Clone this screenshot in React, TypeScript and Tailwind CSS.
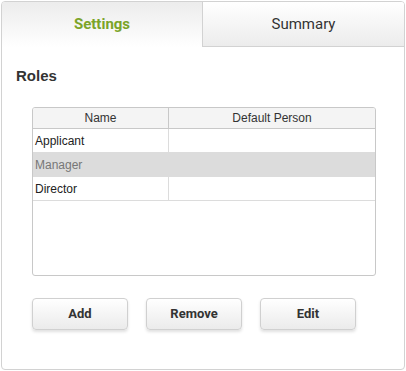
import React from "react";

const rows = [
  { name: "Applicant", person: "", selected: false },
  { name: "Manager", person: "", selected: true },
  { name: "Director", person: "", selected: false },
];

const ActionButton = ({ label }: { label: string }) => (
  <button className="w-[96px] h-[32px] rounded-[4px] border border-[#d0d0d0] bg-gradient-to-b from-white to-[#ebebeb] shadow-[0_2px_3px_rgba(0,0,0,0.12)] text-[13px] font-bold text-[#333] font-['Roboto',sans-serif]">
    {label}
  </button>
);

export default function App() {
  return (
    <div className="p-px bg-white w-[406px] h-[371px]">
      <div className="w-[404px] h-[369px] border border-[#d2d2d2] rounded-[4px] bg-white flex flex-col overflow-hidden">
        <div className="flex h-[45px] shrink-0">
          <div className="w-[200px] flex items-center justify-center bg-gradient-to-b from-[#ececec] to-white text-[15px] font-bold text-[#7ba428] font-['Roboto',sans-serif]">
            Settings
          </div>
          <div className="flex-1 flex items-center justify-center bg-gradient-to-b from-white to-[#ececec] border-l border-b border-[#d2d2d2] text-[15px] text-[#333] font-['Roboto',sans-serif]">
            Summary
          </div>
        </div>
        <div className="flex flex-col px-[14px] pt-[20px]">
          <h2 className="text-[15px] leading-[18px] font-bold text-[#333] font-['Liberation_Sans',Arial,sans-serif]">
            Roles
          </h2>
          <div className="mt-[22px] ml-[16px] w-[344px] h-[169px] border border-[#c8c8c8] rounded-[3px] overflow-hidden font-['Liberation_Sans',Arial,sans-serif] text-[12px]">
            <div className="grid grid-cols-[136px_1fr] h-[21px] bg-[#f4f4f4] border-b border-[#c8c8c8] text-[#333]">
              <div className="flex items-center justify-center border-r border-[#c8c8c8]">Name</div>
              <div className="flex items-center justify-center">Default Person</div>
            </div>
            {rows.map((r) => (
              <div
                key={r.name}
                className={`grid grid-cols-[136px_1fr] h-[24px] border-b border-[#dcdcdc] ${r.selected ? "bg-[#dcdcdc] text-[#777]" : "bg-white text-[#222]"}`}
              >
                <div className={`flex items-center px-[2px] ${r.selected ? "" : "border-r border-[#dcdcdc]"}`}>{r.name}</div>
                <div className="flex items-center px-[2px]">{r.person}</div>
              </div>
            ))}
          </div>
          <div className="flex gap-[18px] ml-[16px] mt-[22px]">
            <ActionButton label="Add" />
            <ActionButton label="Remove" />
            <ActionButton label="Edit" />
          </div>
        </div>
      </div>
    </div>
  );
}
